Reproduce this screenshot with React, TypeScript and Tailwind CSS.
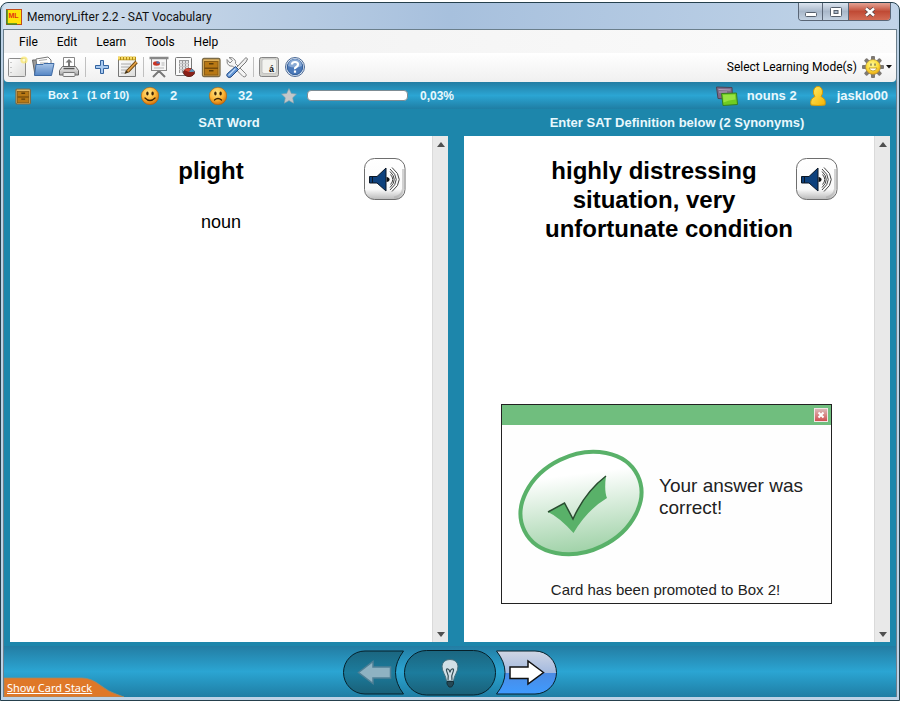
import React from "react";

const ui = "font-[Roboto,'Noto_Sans',sans-serif]";
const arial = "font-['Liberation_Sans',Arial,sans-serif]";

type IconProps = { children: React.ReactNode; size?: number };

function Icon({ children, size = 24 }: IconProps) {
  return (
    <svg width={size} height={size} viewBox={`0 0 ${size} ${size}`} className="shrink-0" aria-hidden="true">
      {children}
    </svg>
  );
}

function Gradients() {
  return (
    <svg width="0" height="0" className="absolute" aria-hidden="true">
      <defs>
        <linearGradient id="paper" x1="0" y1="0" x2="1" y2="1">
          <stop offset="0" stopColor="#ffffff" />
          <stop offset="1" stopColor="#dcdcda" />
        </linearGradient>
        <linearGradient id="folder" x1="0" y1="0" x2="0" y2="1">
          <stop offset="0" stopColor="#a9c6e8" />
          <stop offset="1" stopColor="#5585c4" />
        </linearGradient>
        <linearGradient id="steel" x1="0" y1="0" x2="0" y2="1">
          <stop offset="0" stopColor="#f4f4f4" />
          <stop offset="1" stopColor="#a8a8a8" />
        </linearGradient>
        <radialGradient id="orange" cx="0.42" cy="0.32" r="0.7">
          <stop offset="0" stopColor="#ffe98a" />
          <stop offset="0.6" stopColor="#fbb232" />
          <stop offset="1" stopColor="#cf6d0a" />
        </radialGradient>
        <radialGradient id="sun" cx="0.45" cy="0.35" r="0.65">
          <stop offset="0" stopColor="#fff99c" />
          <stop offset="0.6" stopColor="#fddc35" />
          <stop offset="1" stopColor="#e8a412" />
        </radialGradient>
        <linearGradient id="person" x1="0" y1="0" x2="1" y2="1">
          <stop offset="0" stopColor="#ffec6a" />
          <stop offset="1" stopColor="#f5b400" />
        </linearGradient>
        <linearGradient id="speaker" x1="0" y1="0" x2="0" y2="1">
          <stop offset="0" stopColor="#ffffff" />
          <stop offset="0.75" stopColor="#fafafa" />
          <stop offset="1" stopColor="#b8b8b8" />
        </linearGradient>
        <linearGradient id="oval" x1="0.7" y1="0.05" x2="0.3" y2="0.95">
          <stop offset="0.2" stopColor="#ffffff" />
          <stop offset="1" stopColor="#a0d2a8" />
        </linearGradient>
        <linearGradient id="dim" x1="0" y1="0" x2="0" y2="1">
          <stop offset="0" stopColor="#1b6680" />
          <stop offset="0.5" stopColor="#1c7c9d" />
          <stop offset="1" stopColor="#1a6078" />
        </linearGradient>
        <linearGradient id="next" x1="0" y1="0" x2="0" y2="1">
          <stop offset="0" stopColor="#d0d6e4" />
          <stop offset="0.51" stopColor="#a3b9df" />
          <stop offset="0.52" stopColor="#4a8be4" />
          <stop offset="1" stopColor="#3f9bff" />
        </linearGradient>
      </defs>
    </svg>
  );
}

function Drawer({ size = 24 }: { size?: number }) {
  return (
    <svg width={size} height={size} viewBox="0 0 24 24" className="shrink-0" aria-hidden="true">
      <rect x="3.5" y="3.5" width="17.5" height="18" rx="1.5" fill="#e0b25c" stroke="#7a6a48" strokeWidth="1.3" />
      <rect x="5.500" y="6.500" width="13.500" height="13.500" fill="#b87814" stroke="#8a5c14" />
      <path d="M5.500 13.200h13.500" stroke="#6b4409" strokeWidth="1.300" />
      <path d="M10 8.700h4.500M10 15.700h4.500" stroke="#5d3c08" strokeWidth="1.600" />
    </svg>
  );
}

function Smiley({ sad = false }: { sad?: boolean }) {
  return (
    <Icon size={20}>
      <circle cx="10" cy="10" r="8.7" fill="url(#orange)" stroke="#a85c10" strokeWidth="0.6" />
      <ellipse cx="7.4" cy="7.6" rx="1.2" ry="2" fill="#3b2204" />
      <ellipse cx="12.6" cy="7.6" rx="1.2" ry="2" fill="#3b2204" />
      <path d={sad ? "M6.5 14Q10 11 13.500 14" : "M5 12Q10 17 15 12"} fill="none" stroke="#3b2204" strokeWidth="1.3" strokeLinecap="round" />
    </Icon>
  );
}

const NewIcon = () => (
  <Icon>
    <rect x="3.5" y="3.5" width="17" height="18" rx="1" fill="url(#paper)" stroke="#8b8b8b" />
    <path d="M6 7v1M6 12v1M6 17v1" stroke="#999" />
    <circle cx="19" cy="5" r="3.6" fill="#fbe86c" opacity="0.75" />
    <circle cx="19" cy="5" r="1.5" fill="#fffbd0" />
  </Icon>
);
const OpenIcon = () => (
  <Icon>
    <path d="M1.500 5h6l1 2v13H4z" fill="#9b9b9b" stroke="#666" />
    <path d="M5 4l12-2 3 3v7H6z" fill="#fff" stroke="#777" />
    <path d="M8 5.500l8-1M9 8h8" stroke="#aaa" />
    <path d="M5 9.500h7l1-1h10l-2.500 12H3.500z" fill="url(#folder)" stroke="#3f6ba5" strokeLinejoin="round" />
  </Icon>
);
const PrintIcon = () => (
  <Icon>
    <path d="M6.500 2.500h11V13h-11z" fill="#fff" stroke="#888" />
    <path d="M12 4l3.500 3.500H13V11h-2V7.500H8.500z" fill="#777" />
    <path d="M5.500 11.500h13l3 4v4.500h-19v-4.500z" fill="url(#steel)" stroke="#666" strokeLinejoin="round" />
    <path d="M6.500 13.500h11" stroke="#555" strokeWidth="1.500" />
    <rect x="6" y="17.500" width="12" height="4" rx="1" fill="#efefef" stroke="#777" />
  </Icon>
);
const PlusIcon = () => (
  <Icon>
    <path d="M11.500 5.500h3v5h5v3h-5v5h-3v-5h-5v-3h5z" fill="#a9caf0" stroke="#33639f" />
  </Icon>
);
const NoteIcon = () => (
  <Icon>
    <path d="M3.500 4.500h17v17h-17z" fill="url(#paper)" stroke="#777" />
    <path d="M3 3.500h18" stroke="#b18c14" strokeWidth="3.500" />
    <path d="M3 3h18" stroke="#f5d862" strokeWidth="3" strokeDasharray="2 1" />
    <path d="M6 9h10M6 12h8M6 15h6M6 18h5" stroke="#aaa" />
    <path d="M21.500 7L12.500 16.500" stroke="#6c4510" strokeWidth="3.500" />
    <path d="M21.500 7L12.500 16.500" stroke="#e5a347" strokeWidth="1.800" />
    <path d="M11 15l-1.500 4 4-1.500z" fill="#46310f" />
  </Icon>
);
const BoardIcon = () => (
  <Icon>
    <path d="M12 14v4M12 16l-6 6M12 16l6 6" stroke="#777" strokeWidth="2" />
    <rect x="4.500" y="3.500" width="15" height="12" fill="#f6f6f6" stroke="#888" />
    <path d="M2.500 3h19" stroke="#888" strokeWidth="2.500" />
    <ellipse cx="9.500" cy="8.500" rx="3.500" ry="2.200" fill="#c93525" />
    <path d="M9.500 8.500V6.300a3.500 2.200 0 0 1 3.500 2.200z" fill="#4a79bd" />
    <path d="M14.500 8h3M14.500 10h3M7 13h10" stroke="#b6b6b6" />
  </Icon>
);
const SheetIcon = () => (
  <Icon>
    <rect x="2.500" y="2.500" width="16" height="18" rx="1" fill="#fafafa" stroke="#777" />
    <path d="M6 5h10v13H6z" fill="#e2e2e2" />
    <path d="M6.500 5v13M9.500 5v13M12.500 5v13M15.500 5v13M6 5.500h10" stroke="#9a9a9a" />
    <path d="M6 8.500h10M6 11.500h10M6 14.500h10" stroke="#c4c4c4" />
    <ellipse cx="16" cy="17.500" rx="5.500" ry="4" fill="#8b2018" stroke="#5f2019" />
    <path d="M16 17l-5-2a5.500 4 0 0 1 7-1.200z" fill="#d54a35" />
    <path d="M16 17l2.500-3.200a5.500 4 0 0 1 3 3z" fill="#5b9ac0" />
  </Icon>
);
const ToolsIcon = () => (
  <Icon>
    <path d="M4 2.500l3.500 3-2.500 2.500-3-3.500q-.5 4.500 2 6 2 1 3.500.5L18 21.500q2 1 3-.5.800-1.300-.5-2.500L10.500 8.500q.5-2-.5-3.500Q8 2 4 2.500z" fill="#f4f4f4" stroke="#858585" />
    <path d="M21 2.500l1.500 1.500-1.500 3-7.500 7.500-2-2L19 4.500z" fill="#efefef" stroke="#777" />
    <path d="M10.500 11.500l3 3-7.500 7.500q-2 1.300-3.500-.2t-.3-3z" fill="#5f92d2" stroke="#274e87" strokeLinejoin="round" />
    <path d="M10.500 13.500l-7 7" stroke="#bdd8f5" strokeWidth="1.300" />
  </Icon>
);
const AccentIcon = () => (
  <Icon>
    <rect x="2.500" y="2.500" width="19" height="19" rx="2" fill="#d2d2cd" stroke="#858585" />
    <rect x="5" y="4" width="14.500" height="14.500" rx="2" fill="#f3f3ef" stroke="#bbb" strokeWidth="0.800" />
    <text x="12" y="17" fontSize="9" fontWeight="700" fontFamily="Liberation Sans, sans-serif" fill="#111">á</text>
  </Icon>
);
const HelpIcon = () => (
  <Icon>
    <circle cx="12" cy="12" r="9.500" fill="#d8e3f1" stroke="#4d6b96" />
    <circle cx="12" cy="12" r="7.700" fill="#4b79b9" stroke="#2f5b98" />
    <path d="M5 11a7 7 0 0 1 14 0q-7 3-14 0z" fill="#88a9d4" />
    <path d="M9 9.500Q9 7 12 7t3 2.500Q15 11 13.300 12T12 14.200M12 15.500v2.200" fill="none" stroke="#fff" strokeWidth="2.200" />
  </Icon>
);

const GearSun = () => (
  <Icon>
    <g fill="#7d7974">
      {[0, 45, 90, 135, 180, 225, 270, 315].map((a) => (
        <rect key={a} x="10" y="1" width="4" height="6" rx="1" transform={`rotate(${a} 12 12)`} />
      ))}
    </g>
    <circle cx="12" cy="12" r="7.500" fill="url(#sun)" stroke="#a08a4c" strokeWidth="0.700" />
    <path d="M10 8.500v2.200M14 8.500v2.200" stroke="#73704e" strokeWidth="1.300" />
    <path d="M8 13h8q-1 3-4 3t-4-3z" fill="#fff" stroke="#b98f16" strokeWidth="0.800" />
  </Icon>
);

const Separator = () => (
  <span className="flex w-1.5 justify-center">
    <span className="h-5 w-px bg-[#c0c0c0]" />
  </span>
);

function Tool({ label, children }: { label: string; children: React.ReactNode }) {
  return (
    <button type="button" aria-label={label} className="flex h-6 w-[26px] items-center justify-center">
      {children}
    </button>
  );
}

function TitleBar() {
  return (
    <header className="flex h-[26px] items-start justify-between rounded-t-md bg-linear-to-r from-[#d5e1ed] via-[#a7c0dd] to-[#c1d4e8] pl-[3px]">
      <div className="flex h-7 items-center gap-1">
        <svg width="17" height="16" viewBox="0 0 17 16" aria-hidden="true">
          <rect x="0.500" y="0.500" width="15" height="15" fill="#ffe208" stroke="#c04b1d" />
          <path d="M1 15V1M1 15h10" stroke="#3c8a27" strokeWidth="1.500" />
          <text x="2.500" y="9" fontSize="7" fontWeight="700" fontFamily="Liberation Sans, sans-serif" fill="#e23211">ML</text>
        </svg>
        <h1 className="text-xs text-[#111]">MemoryLifter 2.2 - SAT Vocabulary</h1>
      </div>
      <div className="mr-1.5 flex h-[18px] overflow-hidden rounded-b border border-t-0 border-[#5a6676]">
        <button type="button" aria-label="Minimize" className="flex w-6 items-center justify-center border-r border-[#5a6676] bg-linear-to-b from-[#dbe4ef] via-[#a9b8ca] to-[#c3d2e2]">
          <svg width="12" height="12" aria-hidden="true"><rect x="0.500" y="6.500" width="11" height="4" rx="1" fill="#fff" stroke="#555f6c" /></svg>
        </button>
        <button type="button" aria-label="Maximize" className="flex w-[26px] items-center justify-center border-r border-[#5a6676] bg-linear-to-b from-[#dbe4ef] via-[#a9b8ca] to-[#c3d2e2]">
          <svg width="12" height="12" aria-hidden="true"><rect x="0.500" y="1.500" width="11" height="9" rx="1" fill="#fff" stroke="#555f6c" /><rect x="4" y="4.500" width="4" height="3" fill="#a9b8ca" stroke="#555f6c" /></svg>
        </button>
        <button type="button" aria-label="Close window" className="flex w-[41px] items-center justify-center bg-linear-to-b from-[#e3a294] via-[#c04a35] to-[#d36b54]">
          <svg width="12" height="12" aria-hidden="true"><path d="M2 2.500l8 7M10 2.500l-8 7" stroke="#594748" strokeWidth="4" /><path d="M2 2.500l8 7M10 2.500l-8 7" stroke="#fff" strokeWidth="2.400" /></svg>
        </button>
      </div>
    </header>
  );
}

function Toolbar() {
  return (
    <div className="flex h-[29px] items-center justify-between rounded-b bg-linear-to-b from-white to-[#f0f0f0] pb-0.5">
      <div className="flex items-center">
        <Tool label="New"><NewIcon /></Tool>
        <Tool label="Open"><OpenIcon /></Tool>
        <Tool label="Print"><PrintIcon /></Tool>
        <Separator />
        <Tool label="Add card"><PlusIcon /></Tool>
        <Tool label="Edit cards"><NoteIcon /></Tool>
        <Separator />
        <Tool label="Slide show"><BoardIcon /></Tool>
        <Tool label="Statistics"><SheetIcon /></Tool>
        <Tool label="Boxes"><Drawer /></Tool>
        <Tool label="Settings"><ToolsIcon /></Tool>
        <Separator />
        <Tool label="Characters"><AccentIcon /></Tool>
        <Tool label="Help"><HelpIcon /></Tool>
      </div>
      <button type="button" className="mr-1 flex items-center text-xs text-black">
        <span className="mr-1">Select Learning Mode(s)</span>
        <GearSun />
        <svg width="6" height="4" className="ml-px" aria-hidden="true"><path d="M0 0h6L3 3.500z" fill="#111" /></svg>
      </button>
    </div>
  );
}

function StatusBar() {
  return (
    <div className={`${arial} flex h-[27px] items-center justify-between bg-linear-to-b from-[#237da3] via-[#2ba5d3] to-[#1f7ea4] text-[13px] font-bold text-[#e8f8fd]`}>
      <div className="flex items-center pl-[9px]">
        <Drawer size={20} />
        <span className="ml-[15px] w-[39px] text-[11px]">Box 1</span>
        <span className="w-[53px] text-[11px]">(1 of 10)</span>
        <Smiley />
        <span className="ml-2.5 w-[38px]">2</span>
        <Smiley sad />
        <span className="ml-2.5 w-[43px]">32</span>
        <svg width="16" height="16" viewBox="0 0 16 16" aria-hidden="true">
          <path d="M8 .5l2.300 4.900 5.200.7-3.800 3.700.9 5.400L8 12.600l-4.600 2.600.9-5.400L.5 6.100l5.200-.7z" fill="#c4c8ca" stroke="#8a9fa9" strokeWidth="0.600" />
        </svg>
        <span role="progressbar" aria-label="Score" aria-valuenow={0} className="ml-2.5 h-[11px] w-[101px] rounded-sm border border-[#7d8c94] bg-white" />
        <span className="ml-3 text-xs">0,03%</span>
      </div>
      <div className="flex items-center pr-2">
        <svg width="22" height="20" viewBox="0 0 22 20" aria-hidden="true">
          <path d="M.5 1l15.500.5.5 12L2 12.500z" fill="#806a88" stroke="#4b4454" />
          <path d="M2.500 3.500l12 .5M3 6h8" stroke="#b3a4ba" />
          <path d="M5.500 7.500l15-.5 1 11.500-14.500 1z" fill="#6fcc22" stroke="#357f20" />
          <path d="M7 9l12-.5.500 5q-7 .5-12 3z" fill="#a8ec50" opacity="0.700" />
        </svg>
        <span className="mr-3 ml-[9px]">nouns 2</span>
        <svg width="18" height="20" viewBox="0 0 18 20" aria-hidden="true">
          <path d="M2 19q-1.500-6 4-8.500Q4 8 4.500 5 5.500.5 9 .5T13.500 5q.5 3-1.500 5.500 5.500 2.500 4 8.500-7 1-14 0z" fill="url(#person)" stroke="#d29a0b" />
        </svg>
        <span className="ml-2.5">jasklo00</span>
      </div>
    </div>
  );
}

function Scrollbar() {
  return (
    <div className="flex w-4 shrink-0 flex-col items-center justify-between border-l border-[#dadada] bg-[#e9e9e9]">
      <button type="button" aria-label="Scroll up" className="flex h-4 items-center">
        <svg width="8" height="5" aria-hidden="true"><path d="M0 5l4-5 4 5z" fill="#505050" /></svg>
      </button>
      <button type="button" aria-label="Scroll down" className="flex h-4 items-center">
        <svg width="8" height="5" aria-hidden="true"><path d="M0 0h8L4 5z" fill="#505050" /></svg>
      </button>
    </div>
  );
}

function SpeakerButton({ className }: { className: string }) {
  return (
    <button type="button" aria-label="Play audio" className={`float-right mt-0.5 ${className}`}>
      <svg width="42" height="42" viewBox="0 0 42 42" aria-hidden="true">
        <rect x="0.500" y="0.500" width="40.500" height="41" rx="10" fill="url(#speaker)" stroke="#6e6e6e" />
        <path d="M39 11v20q-1 7-9 8.500" fill="none" stroke="#aaa" strokeWidth="2" opacity="0.500" />
        <path d="M5.500 18.500H13L22 10v23L13 25H5.500z" fill="#0d417d" stroke="#0a1726" />
        <path d="M8.500 18v7" stroke="#0a1726" />
        <path d="M22.500 19q3 .5 3 2.500t-3 2.500z" fill="#111" />
        <path d="M26.500 16.500q4.500 5 0 10M26 13.500q8.500 8 0 16M26 11q12.500 10.500 0 21M28 9.500q14.500 12 0 24" fill="none" stroke="#444" strokeWidth="1" />
      </svg>
    </button>
  );
}

function AnswerPopup() {
  return (
    <section role="dialog" aria-label="Answer result" className="absolute right-[58px] bottom-[38px] h-[200px] w-[331px] border border-[#222] bg-[#fefefe] text-[#222]">
      <div className="flex h-5 items-center justify-end bg-[#70be7e] pr-[3px]">
        <button type="button" aria-label="Close" className="flex size-3.5 items-center justify-center border border-[#f3e4e4] bg-linear-to-b from-[#d9b9b9] to-[#ce4f52]">
          <svg width="8" height="8" aria-hidden="true"><path d="M1.500 1.500l5 5M6.500 1.500l-5 5" stroke="#fff" strokeWidth="2" /></svg>
        </button>
      </div>
      <div className="flex h-[155px] items-center gap-[15px] pl-4">
        <svg width="126" height="108" viewBox="0 0 126 108" className="shrink-0" aria-hidden="true">
          <ellipse cx="63" cy="54" rx="63" ry="48" transform="rotate(-26 63 54)" fill="url(#oval)" stroke="#59b169" strokeWidth="4" />
          <path d="M30 63L46.500 54L55 70Q67 43 88 27Q86 42 89 49Q69 61 55.500 84Q41 68 30 63z" fill="#59b169" />
          <path d="M30 63L46.500 54L55 70Q67 43 88 27" fill="none" stroke="#294c30" strokeWidth="1.500" />
        </svg>
        <p className="mb-3 w-[160px] text-[19px] leading-[22px]">Your answer was correct!</p>
      </div>
      <p className="pr-0.5 text-center text-[15px] leading-5">Card has been promoted to Box 2!</p>
    </section>
  );
}

function Navigation() {
  return (
    <footer className="relative flex h-[51px] items-center justify-center bg-linear-to-b from-[#237da3] via-[#2ba5d3] to-[#1f7ea4] pt-0.5">
      <svg width="120" height="20" viewBox="0 0 120 20" className="absolute bottom-0 left-0" aria-hidden="true">
        <path d="M0 1h78q9 0 18 7t16 9l8 3H0z" fill="#df7828" stroke="#9f8a68" strokeWidth="0.800" />
      </svg>
      <a href="#stack" className="absolute bottom-px left-[3px] font-['Noto_Sans',sans-serif] text-[11px] leading-4 text-white underline">Show Card Stack</a>
      <nav aria-label="Cards" className="flex items-center">
        <button type="button" aria-label="Previous card">
          <svg width="61" height="45" viewBox="0 0 61 45" aria-hidden="true">
            <path d="M60.500 1H22a21.500 21.500 0 0 0 0 43h38.500q-16-21.500 0-43z" fill="url(#dim)" stroke="#06202a" />
            <path d="M15.500 22.500L30 11.500V17h17.500v11H30v5.500z" fill="#8eb2c2" stroke="#4f8096" strokeWidth="1.500" />
          </svg>
        </button>
        <button type="button" aria-label="Hint">
          <svg width="92" height="46" viewBox="0 0 92 46" aria-hidden="true">
            <rect x="0.500" y="0.500" width="91" height="44.500" rx="22" fill="url(#dim)" stroke="#06202a" />
            <path d="M42.500 31Q42 27 40 23.500T38 16q1-6.500 8-6.500t8 6.500q0 4-2 7.500T49.500 31z" fill="#d1e0e7" stroke="#45717f" />
            <path d="M44 30q1-4-1-8-1.500-3.500 1-3 1.500.5 2 3.500.500-3 2-3.500 2.500-.5 1 3-2 4-1 8" fill="none" stroke="#344d55" strokeWidth="1.200" />
            <path d="M43 31.500h6.500V34l-2 3h-2.500l-2-3z" fill="#254956" stroke="#173039" />
          </svg>
        </button>
        <button type="button" aria-label="Next card">
          <svg width="61" height="45" viewBox="0 0 61 45" aria-hidden="true">
            <path d="M.5 1H39a21.500 21.500 0 0 1 0 43H.5q17-21.500 0-43z" fill="url(#next)" stroke="#06202a" />
            <path d="M47.500 22.500L32 11v6H14v11.500h18V34z" fill="#fff" stroke="#111" strokeWidth="1.500" />
          </svg>
        </button>
      </nav>
    </footer>
  );
}

export default function App() {
  return (
    <div className={`${ui} flex min-h-screen flex-col bg-white pt-0.5`}>
      <Gradients />
      <div className="flex flex-1 flex-col rounded-t-lg border border-[#25404d] bg-[#bdd2e6] px-0.5 pb-[3px]">
        <TitleBar />
        <div className="flex flex-1 flex-col border-x border-t border-[#6b7f8c] bg-[#1d86ab]">
          <nav aria-label="Menu" className="flex h-[23px] items-center gap-[19px] bg-linear-to-r from-[#f0f0f0] to-[#fbfbfb] pl-[15px] text-xs text-black">
            {["File", "Edit", "Learn", "Tools", "Help"].map((m) => (
              <button type="button" key={m}>{m}</button>
            ))}
          </nav>
          <Toolbar />
          <StatusBar />
          <main className={`${arial} flex flex-1 gap-4 px-1.5 pb-1`}>
            <section className="flex flex-[438] flex-col">
              <h2 className="text-center text-[13px] leading-[27px] font-bold text-[#e8f8fd]">SAT Word</h2>
              <div className="flex flex-1 bg-white">
                <div className="flex-1 px-12 pt-5 text-center text-black">
                  <SpeakerButton className="-mr-[22px]" />
                  <p className="text-2xl leading-[29px] font-bold">plight</p>
                  <p className="clear-both pt-3 text-lg leading-5">noun</p>
                </div>
                <Scrollbar />
              </div>
            </section>
            <section className="flex flex-[426] flex-col">
              <h2 className="text-center text-[13px] leading-[27px] font-bold text-[#e8f8fd]">Enter SAT Definition below (2 Synonyms)</h2>
              <div className="relative flex flex-1 bg-white">
                <div className="flex-1 px-12 pt-5 text-center text-black">
                  <SpeakerButton className="-mr-3" />
                  <p className="text-2xl leading-[29px] font-bold">highly distressing situation, very unfortunate condition</p>
                </div>
                <Scrollbar />
                <AnswerPopup />
              </div>
            </section>
          </main>
          <Navigation />
        </div>
      </div>
    </div>
  );
}
